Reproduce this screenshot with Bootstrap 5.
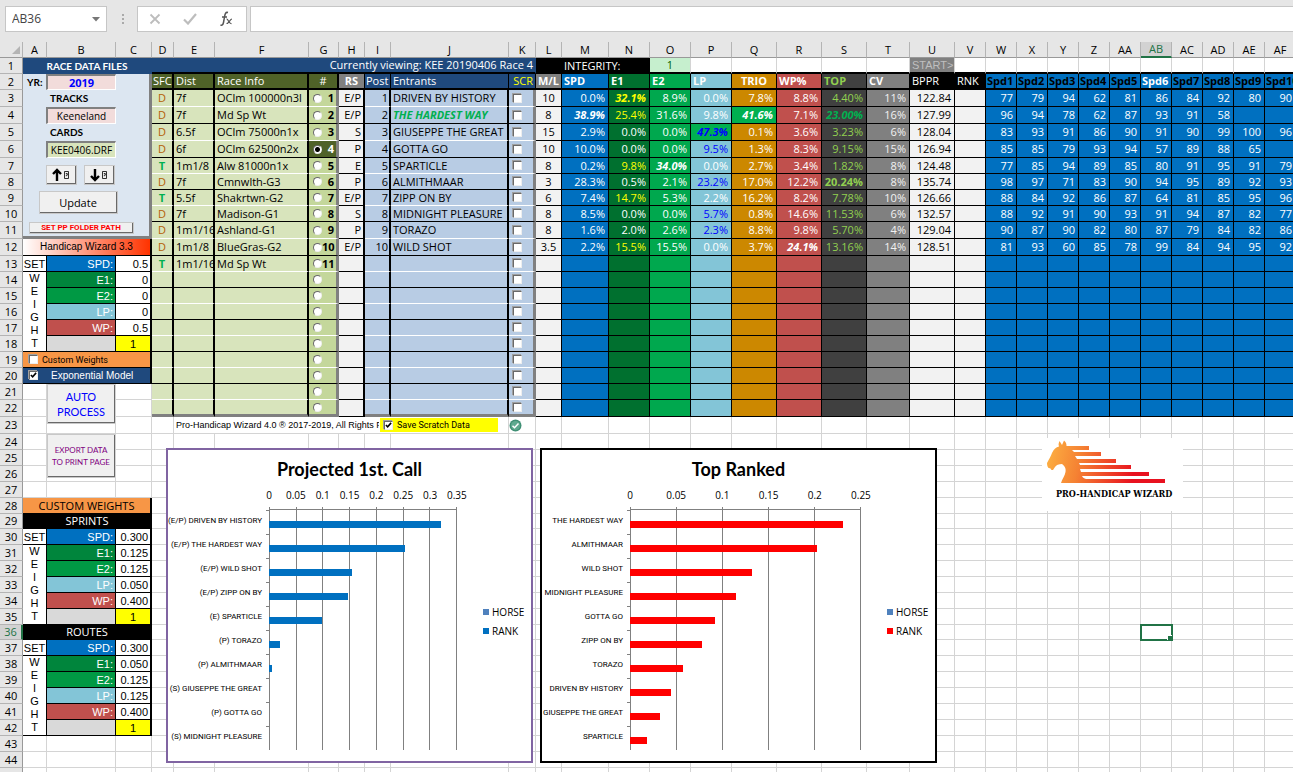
<!DOCTYPE html>
<html lang="en">
<head>
<meta charset="utf-8">
<meta name="viewport" content="width=device-width, initial-scale=1">
<title>Pro-Handicap Wizard</title>
<link href="https://cdn.jsdelivr.net/npm/bootstrap@5.3.0/dist/css/bootstrap.min.css" rel="stylesheet">
<style>
body{font-family:"Open Sans","Noto Sans",sans-serif;font-size:11px;line-height:14px;color:#000;background:#fff}
.toolbar-strip{background:#e6e6e6;height:42px;padding:6px 0 0 5px}
.fx-box{height:26px;border:1px solid #c6c6c6;background:#fff;border-radius:0}
.name-box{width:102px;padding:0 6px}
.name-box input{border:0;width:80px;padding:0;font-size:12px;color:#444;background:none}
.fx-tools{width:110px;margin-left:12px}
.fx-tools button{border:0;background:none;padding:0;line-height:0}
.fx-input{margin-left:3px;border-right:0}
.dots{margin-left:14px;width:4px}
.sheet{table-layout:fixed;width:1296px;border-collapse:separate;border-spacing:0}
.sheet th,.sheet td{padding:0 2px;border:solid #d4d4d4;border-width:0 1px 1px 0;overflow:hidden;white-space:nowrap;font-weight:400;line-height:14px;vertical-align:middle}
.sheet thead th{background:#e6e6e6;text-align:center;border-color:#b4b4b4;border-bottom-color:#999}
.sheet .rh{background:#e6e6e6;text-align:center;border-color:#b4b4b4;border-right-color:#999;padding:0}
.sheet thead .hot{background:#d2d2d2;color:#217346;border-bottom:2px solid #217346}
.sheet .rh.hot{background:#d2d2d2;color:#217346;border-right:2px solid #217346}
.sheet .r{text-align:right}.sheet .c{text-align:center}
.sheet .b{font-weight:700}.sheet .bi{font-weight:700;font-style:italic}
.sheet .blk{background:#000;color:#fff;border-color:#000}
.sheet .navy{background:#1f497d;color:#fff;border-color:#1f497d}
.sheet .ttl{font-family:Lato,sans-serif}
.sheet .h1b{border-bottom:2px solid #000}
.sheet .hdr{border-color:#000;border-bottom:2px solid #000}
.sheet .g1,.sheet .g2,.sheet .g3{border-right:2px solid #000;background:#d8e4bc}
.sheet .g1,.sheet .g2,.sheet .g3,.sheet .g4{border-bottom-color:#000}
.sheet .g4{background:#c4d79b;border-right:3px solid #808080;font-weight:700;padding:0 2px 0 4px}
.sheet .g4.on{background:#4f6228;color:#fff}
.sheet .rs{background:#f2f2f2;border-right:2px solid #000;border-bottom-color:#000;text-align:right}
.sheet .e1,.sheet .e2,.sheet .e3{background:#b8cce4;border-right:2px solid #000;border-bottom-color:#000}
.sheet .e3{border-right:3px solid #808080;padding-left:4px}
.sheet .e1{text-align:right;padding-right:1px}
.sheet .e2{padding-right:0}
.sheet .odd .g1,.sheet .odd .g2,.sheet .odd .g3,.sheet .odd .g4,.sheet .odd .e1,.sheet .odd .e2,.sheet .odd .e3{border-bottom-color:#fff}
.sheet .last .g1,.sheet .last .g2,.sheet .last .g3,.sheet .last .g4,.sheet .last .e1,.sheet .last .e2,.sheet .last .e3{border-bottom:3px solid #808080}
.sheet .gh{background:#4f6228;color:#fff;border-right-width:2px}
.sheet .tight{padding:0 1px}
.sheet .gray{background:#808080;color:#fff}
.sheet .n{border-color:#000;text-align:right;padding-right:3px;color:#fff}
.sheet .n.c{text-align:center;padding-right:2px}
.sheet .m{background:#0070c0}.sheet .e1c{background:#00702f}.sheet .e2c{background:#00a84e}
.sheet .lp{background:#83c5d7}.sheet .tr{background:#c80}.sheet .wp{background:#c0504d}
.sheet .tp{background:#404040;color:#92d050}.sheet .cv{background:#808080;color:#f2f2f2}
.sheet .lt{background:#f2f2f2;color:#000}
.sheet .hi{background:#00b050}
.sheet .yl{color:#ff0}.sheet .bl{color:#00f}
.sheet .th-l{text-align:left;color:#fff;font-weight:700}
.sheet .blackt{color:#000}
.dirt{color:#b45f06}.turf{color:#00b050;font-weight:700}
.sheet .turf-c{color:#00b050;font-weight:700}
.sheet .w{font-family:"Liberation Sans",sans-serif;border-color:#000}
.sheet .wg1{background:#00853c}.sheet .wg2{background:#009944}.sheet .sum{background:#ff0}.sheet .d9{background:#d9d9d9}
.sheet .endc{border-right:2px solid #000}
.sheet .set-c{padding:0}
.sheet .s10{font-size:10px}
.sheet .orange{background:#f79646}
.sheet .vert{font-family:"Liberation Sans",sans-serif;vertical-align:top;border-color:#000;padding:0;text-align:center}
.vert div{line-height:13px}
.sheet .wiz{background:linear-gradient(90deg,#fff,#ff3300)}
.sheet .panel-cell{background:#dce6f1;padding:0;border-right:3px solid #808080;border-bottom:3px solid #808080;vertical-align:top}
.files{display:grid;grid-template-columns:23px 70px 1fr;grid-template-rows:16px 17px 17px 17px 17px}
.files label{font-weight:700;font-size:10px;line-height:16px;font-family:Lato,sans-serif}
.files input{font-size:10px;width:70px;padding:0;text-align:center;border:solid;border-width:2px 1px 1px 2px;border-color:#808080 #fff #fff #808080;background:#f2dcdb;border-radius:0}
.files .yr-in{color:#00f;font-weight:700;font-size:11px}
.files .card-in{background:#d8e4bc}
.btn3d{background:#f0f0f0;border:solid;border-width:1px 2px 2px 1px;border-color:#fff #696969 #696969 #fff;padding:0;border-radius:0;font-size:11px;line-height:15px;color:#000;outline:1px solid #c8c8c8;outline-offset:-1px}
.btn-arrow{width:31px;height:20px;line-height:0}
.btn-up{width:79px;height:23px;margin:6px 0 0 16px}
.btn-path{width:105px;height:12px;font-size:8px;line-height:8px;color:red;font-weight:700;font-family:Roboto,sans-serif;margin:8px 0 0 6px}
.btn-auto{width:69px;height:40px;color:#00f;font-family:Lato,sans-serif}
.btn-export{width:69px;height:44px;color:#800080;font-size:8px;line-height:12px;font-family:Lato,sans-serif}
.arrows{margin:7px 0 0 23px;gap:7px}
.ck{appearance:none;width:9px;height:9px;margin:0;background:#fff;border:solid;border-width:1px;border-color:#696969 #eee #eee #696969;display:block;flex:none;box-shadow:-1px -1px 0 #a0a0a0}
.ck:checked{background:#fff url("data:image/svg+xml,%3Csvg xmlns='http://www.w3.org/2000/svg' viewBox='0 0 8 8'%3E%3Cpath d='M1 3.5l2 2 4-4.500' fill='none' stroke='%23000' stroke-width='1.800'/%3E%3C/svg%3E") center/7px no-repeat}
.rd{appearance:none;width:9px;height:9px;margin:0;border-radius:50%;background:#fff;border:1px solid;border-color:#696969 #eee #eee #696969;display:block;flex:none}
.rd:checked{background:radial-gradient(#000 2px,#fff 3px)}
.cw-lbl{font:9px/14px Roboto,sans-serif;padding-left:4px}
.em-lbl{font-size:10px;gap:13px;padding-left:4px}
.save-lbl{background:#ff0;height:14px;width:118px;font-family:Roboto,sans-serif;font-size:9px;margin-left:1px;padding-left:4px}
.copy{font-family:"Liberation Sans",sans-serif;width:203px;font-size:9px;line-height:16px}
.sheet .sel{overflow:visible;position:relative;outline:2px solid #217346;outline-offset:-1px}
.sel::after{content:"";position:absolute;right:-2px;bottom:-2px;width:5px;height:5px;background:#217346;box-shadow:-1px -1px 0 #fff}
.chart-a,.chart-b{position:absolute;top:406px;height:315px;background:#fff;border:2px solid #8064a2;padding:8px 0 0}
.chart-a{left:166px;width:367px}
.chart-b{left:540px;width:397px;border-color:#000}
.chart-title{font-size:18px;line-height:22px;font-weight:700;text-align:center;margin:0;font-family:Lato,sans-serif}
.chart-body{display:grid;grid-template-columns:var(--lab) var(--plot) 1fr;font-size:10px}
.axis{grid-column:2;height:29px;padding-top:6px;line-height:18px}
.axis span{width:0;display:flex;justify-content:center}
.names{grid-column:1;font-size:8px;font-family:Roboto,sans-serif;white-space:nowrap}
.names div{height:24px;line-height:24px;text-align:right;padding-right:7px}
.plot{grid-column:2;height:241px;border-top:1px solid #808080}
.gridl{position:absolute;left:0;right:0;top:-3px;bottom:0}
.gridl i{flex:1 1 0;border-left:1px solid #808080}
.gridl i:last-child{flex:0 0 1px}
.bars div{height:24px;position:relative;padding-top:11px}
.bars div::before{content:"";position:absolute;left:-3px;top:0;width:3px;height:1px;background:#808080}
.bars b{display:block;height:7px;background:var(--bar)}
.legend-c{grid-column:3;padding:96px 0 0 var(--leg);line-height:14px}
.legend-c i{width:6px;height:6px;margin-right:3px}
.legend-c div{margin-bottom:5px}
.logo-box{position:absolute;left:1042px;top:396px;width:141px;height:73px;background:#fff}
.sheet-area{min-height:0}
</style>
</head>
<body class="vh-100 d-flex flex-column overflow-hidden">
<header class="toolbar-strip d-flex flex-shrink-0">
  <div class="fx-box name-box d-flex align-items-center justify-content-between">
    <input type="text" value="AB36" aria-label="Name box">
    <svg width="8" height="5" viewBox="0 0 8 5"><path d="M0 0h8L4 4.500z" fill="#777"/></svg>
  </div>
  <svg class="dots" width="4" height="26" viewBox="0 0 4 26"><path d="M1 8h2v2H1zM1 12h2v2H1zM1 16h2v2H1z" fill="#aaa"/></svg>
  <div class="fx-box fx-tools d-flex align-items-center justify-content-around">
    <button type="button" aria-label="Cancel"><svg width="12" height="12" viewBox="0 0 12 12"><path d="M1.500 1.500l9 9M10.500 1.500l-9 9" stroke="#bdbdbd" stroke-width="1.800"/></svg></button>
    <button type="button" aria-label="Enter"><svg width="14" height="12" viewBox="0 0 14 12"><path d="M1 6.500l4 4L13 1" fill="none" stroke="#bdbdbd" stroke-width="2.200"/></svg></button>
    <button type="button" aria-label="Insert function"><svg width="16" height="16" viewBox="0 0 16 16"><g fill="none" stroke="#555"><path d="M9 1.500C6.500.800 6 3 5.500 6L4.500 11.500C4 14 3 14.500 1.500 14M3 6h5" stroke-width="1.500"/><path d="M7.500 8c2-.5 2 5 5 4.500M13 8c-2 0-3 4.500-5.500 4.500" stroke-width="1.200"/></g></svg></button>
  </div>
  <input class="fx-box fx-input flex-grow-1" type="text" aria-label="Formula bar">
</header>
<main class="sheet-area position-relative flex-grow-1 overflow-hidden">
  <table class="sheet" id="sheet"></table>
  <section class="chart-a" id="chartA" aria-label="Projected 1st. Call"></section>
  <section class="chart-b" id="chartB" aria-label="Top Ranked"></section>
  <div class="logo-box">
    <svg width="141" height="73" viewBox="0 0 141 73" role="img" aria-label="Pro-Handicap Wizard logo">
      <defs><linearGradient id="fire" gradientUnits="userSpaceOnUse" x1="4" y1="0" x2="95" y2="20"><stop offset="0" stop-color="#fdb544"/><stop offset=".4" stop-color="#f58233"/><stop offset="1" stop-color="#e8111f"/></linearGradient></defs>
      <path fill="url(#fire)" d="M17 8.500C16 6 17 5 17.500 3L20 7L22 2.500C24 4 24.500 6 24.500 8H47V12H30L32 14H59V18H33L35 21H74V25H37L38 27H89V31H38L39 34H107V38H40C41 40 42 40.500 44 41H123V45H19C20 41 23 38 23.500 34C24 31 23.500 29 20 26C17 26 14 27 13 29L11 32C9 32.500 9 31 8 30C6 31 5 28 5 25C7 21 9 18 10 15C12 11 14 9 17 8.500Z"/>
      <text x="14" y="59" font-family="'DejaVu Serif Condensed','DejaVu Serif',serif" font-weight="700" font-size="9" fill="#000">PRO-HANDICAP WIZARD</text>
    </svg>
  </div>
</main>
<script>
const widths=[23,24,69,36,22,41,94,30,26,26,118,27,26,47,41,41,41,45,45,45,43,45,31,31,31,31,31,31,31,31,31,31,31];
const letters='A B C D E F G H I J K L M N O P Q R S T U V W X Y Z AA AB AC AD AE AF'.split(' ');
const heights={3:17,4:17,5:17,6:17,11:17,12:17,22:17,23:17,29:15,36:15};
const td=(t='',c='',a='')=>`<td class="${c}" ${a}>${t}</td>`;
const blanks=n=>'<td></td>'.repeat(n);

const races=[['D','7f','OClm 100000n3l'],['D','7f','Md Sp Wt'],['D','6.5f','OClm 75000n1x'],['D','6f','OClm 62500n2x'],['T','1m1/8','Alw 81000n1x'],['D','7f','Cmnwlth-G3'],['T','5.5f','Shakrtwn-G2'],['D','7f','Madison-G1'],['D','1m1/16','Ashland-G1'],['D','1m1/8','BlueGras-G2'],['T','1m1/16','Md Sp Wt']];
/* suffixes on a value: * bold italic, y yellow, u blue, h highlighted cell, b bold, g green */
const horses=[
['E/P','DRIVEN BY HISTORY','10','0.0%','32.1%*y','8.9%','0.0%','7.8%','8.8%','4.40%','11%','122.84','77 79 94 62 81 86 84 92 80 90'],
['E/P','THE HARDEST WAY','8','38.9%*','25.4%y','31.6%','9.8%','41.6%*h','7.1%','23.00%*g','16%','127.99','96 94 78 62 87 93 91 58'],
['S','GIUSEPPE THE GREAT','15','2.9%','0.0%','0.0%','47.3%*uh','0.1%','3.6%','3.23%','6%','128.04','83 93 91 86 90 91 90 99 100 96'],
['P','GOTTA GO','10','10.0%','0.0%','0.0%','9.5%u','1.3%','8.3%','9.15%','15%','126.94','85 85 79 93 94 57 89 88 65'],
['E','SPARTICLE','8','0.2%','9.8%y','34.0%*','0.0%','2.7%','3.4%','1.82%','8%','124.48','77 85 94 89 85 80 91 95 91 79'],
['P','ALMITHMAAR','3','28.3%','0.5%','2.1%','23.2%u','17.0%','12.2%','20.24%b','8%','135.74','98 97 71 83 90 94 95 89 92 93'],
['E/P','ZIPP ON BY','6','7.4%','14.7%y','5.3%','2.2%','16.2%','8.2%','7.78%','10%','126.66','88 84 92 86 87 64 81 85 95 96'],
['S','MIDNIGHT PLEASURE','8','8.5%','0.0%','0.0%','5.7%u','0.8%','14.6%','11.53%','6%','132.57','88 92 91 90 93 91 94 87 82 77'],
['P','TORAZO','8','1.6%','2.0%','2.6%','2.3%u','8.8%','9.8%','5.70%','4%','129.04','90 87 90 82 80 87 79 84 82 86'],
['E/P','WILD SHOT','3.5','2.2%','15.5%y','15.5%','0.0%','3.7%','24.1%*','13.16%','14%','128.51','81 93 60 85 78 99 84 94 95 92']];
const cols=['m','e1c','e2c','lp','tr','wp','tp','cv'];

const filesPanel=`<div class="files">
 <label for="yr" class="ps-1">YR:</label><input id="yr" class="yr-in" value="2019"><span></span>
 <span></span><label for="trk" class="ps-1">TRACKS</label><span></span>
 <span></span><input id="trk" value="Keeneland"><span></span>
 <span></span><label for="crd" class="ps-1">CARDS</label><span></span>
 <span></span><input id="crd" class="card-in" value="KEE0406.DRF"><span></span></div>
 <div class="d-flex arrows">${['M6 13V2M2 6l4-4 4 4','M6 1v11M2 8l4 4 4-4'].map((d,i)=>`<button type="button" class="btn3d btn-arrow" aria-label="${i?'Next':'Previous'}"><svg width="20" height="14" viewBox="0 0 20 14"><path d="${d}" fill="none" stroke="#000" stroke-width="2.400"/><path d="M13.500 3.500h4v7h-4zM14.800 5.500h1.500v1.700h-1v1" fill="none" stroke="#000" stroke-width=".8"/></svg></button>`).join('')}</div>
 <button type="button" class="btn3d btn-up d-block">Update</button>
 <button type="button" class="btn3d btn-path d-block">SET PP FOLDER PATH</button>`;
const vert=n=>td([...'WEIGHT'].map(l=>`<div>${l}</div>`).join(''),'vert',`rowspan="${n}"`);
const W=[['SPD:','m'],['E1:','wg1'],['E2:','wg2'],['LP:','lp'],['WP:','wp']];
const weights=(i,vals)=>{
  const v=i<5?vals[i]:'1';
  return (i==0?td('SET','w c set-c'):i==1?vert(5):'')+
    (i<5?td(W[i][0],'w r text-white '+W[i][1]):td('','w d9'))+td(v,'w endc '+(i<5?'r':'c sum'));
};
function left(r){
  if(r==1)return td('RACE DATA FILES','navy b c ttl s10','colspan="3"');
  if(r==2)return td(filesPanel,'panel-cell','colspan="3" rowspan="10"');
  if(r<12)return'';
  if(r==12)return td('Handicap Wizard 3.3','w c wiz endc s10','colspan="3"');
  if(r<19)return weights(r-13,['0.5','0','0','0','0.5']);
  if(r==19)return td('<label class="d-flex align-items-center gap-1 cw-lbl"><input type="checkbox" class="ck">Custom Weights</label>','w orange endc','colspan="3"');
  if(r==20)return td('<label class="d-flex align-items-center em-lbl"><input type="checkbox" class="ck" checked>Exponential Model</label>','w navy endc','colspan="3"');
  if(r==21)return'<td></td>'+td('<button type="button" class="btn3d btn-auto d-block">AUTO<br>PROCESS</button>','p-0 align-top','rowspan="3"')+'<td></td>';
  if(r==24)return'<td></td>'+td('<button type="button" class="btn3d btn-export d-block">EXPORT DATA<br>TO PRINT PAGE</button>','p-0 align-top','rowspan="3"')+'<td></td>';
  if(r<27)return blanks(2);
  if(r==28)return td('CUSTOM WEIGHTS','w orange c endc','colspan="3" style="font-family:inherit"');
  if(r==29||r==36)return td(r==29?'SPRINTS':'ROUTES','blk c','colspan="3"');
  if(r>=30&&r<36)return weights(r-30,['0.300','0.125','0.125','0.050','0.400']);
  if(r>=37&&r<43)return weights(r-37,['0.300','0.050','0.125','0.125','0.400']);
  return blanks(3);
}
function pct(v,c){
  const[,n,f]=v.match(/^([\d.]+%)(.*)$/);let k='n '+c;
  if(f.includes('*'))k+=' bi';if(f.includes('b'))k+=' b';if(f.includes('y'))k+=' yl';if(f.includes('u'))k+=' bl';if(f.includes('h'))k+=' hi';
  return td(f.includes('g')?`<span class="turf">${n}</span>`:n,k);
}
function right(r){
  if(r==1)return td('Currently viewing: KEE 20190406 Race 4','navy r h1b','colspan="8"')+td('INTEGRITY:','blk','colspan="3" style="padding-left:28px"')+td('1','c h1b','style="background:#c6efce;color:#006100"')+
    td('','h1b').repeat(5)+td('START&gt;','gray c h1b','style="color:#bfbfbf;font-family:Liberation Sans"')+td('','h1b').repeat(11);
  if(r==2)return['SFC','Dist','Race Info'].map((t,i)=>td(t,'hdr gh'+(i?'':' tight'))).join('')+td('#','hdr gh c')+td('RS','hdr gray b c')+
    td('Post','hdr navy tight','style="border-color:#000"')+td('Entrants','hdr navy','style="border-color:#000"')+td('SCR','hdr navy yl r','style="border-color:#000"')+td('M/L','hdr gray b c tight')+
    ['SPD','E1','E2','LP','TRIO','WP%','TOP','CV'].map((t,i)=>td(t,'hdr n '+cols[i]+(t=='TRIO'?' b c':t=='TOP'?' b text-start':' th-l'))).join('')+
    td('BPPR','hdr blk')+td('RNK','hdr blk')+Array.from({length:10},(_,i)=>td('Spd'+(i+1),'hdr m b tight'+(i==5?' text-white':' blackt'))).join('');
  if(r<23){
    const g=races[r-3]||[],h=horses[r-3],n=r-2,on=n==4;
    let s=td(g[0]||'','g1 c '+(g[0]=='T'?'turf-c':'dirt'))+td(g[1]||'','g2')+td(g[2]||'','g3')+
      td(`<div class="d-flex align-items-center justify-content-between"><input type="radio" name="race" class="rd" aria-label="Race ${n}" ${on?'checked':''}><span>${g[0]?n:''}</span></div>`,'g4'+(on?' on':''))+
      td(h?h[0]:'','rs')+td(h?n:'','e1')+td(h?(n==2?`<span class="turf fst-italic">${h[1]}</span>`:h[1]):'','e2')+
      td(`<input type="checkbox" class="ck" aria-label="Scratch ${n}">`,'e3')+td(h?h[2]:'','n lt c');
    for(let i=0;i<8;i++)s+=h?pct(h[3+i],cols[i]):td('','n '+cols[i]);
    s+=td(h?h[11]:'','n lt')+td('','n lt');
    const sp=h?h[12].split(' '):[];
    for(let i=0;i<10;i++)s+=td(sp[i]||'','n m');
    return s;
  }
  if(r==23)return'<td></td>'+td(`<div class="d-flex align-items-center"><span class="copy overflow-hidden">Pro-Handicap Wizard 4.0 ® 2017-2019, All Rights F</span><label class="save-lbl d-flex align-items-center gap-1"><input type="checkbox" class="ck" checked>Save Scratch Data</label></div>`,'','colspan="6"')+
    td('<svg class="d-block" width="13" height="13" viewBox="0 0 13 13"><circle cx="6.500" cy="6.500" r="6" fill="#3f8f74"/><circle cx="6.500" cy="6.500" r="4.600" fill="#5fa98f"/><path d="M3.500 6.800l2 2 4-4.200" fill="none" stroke="#fff" stroke-width="1.500"/></svg>','p-0')+blanks(21);
  return r==36?blanks(24)+td('','sel')+blanks(4):blanks(29);
}
let html='<colgroup>'+widths.map(w=>`<col style="width:${w}px">`).join('')+'</colgroup><thead><tr style="height:16px"><th scope="col" class="p-0"><svg class="d-block ms-auto" width="11" height="10" viewBox="0 0 11 10"><path d="M9 1v8H1z" fill="#b4b4b4"/></svg></th>'+
  letters.map(l=>`<th scope="col" class="${l=='AB'?'hot':''}">${l}</th>`).join('')+'</tr></thead><tbody>';
for(let r=1;r<=60;r++)html+=`<tr class="${r==22?'last':r%2?'odd':''}" style="height:${heights[r]||16}px"><th scope="row" class="rh${r==36?' hot':''}">${r}</th>${left(r)}${right(r)}</tr>`;
document.getElementById('sheet').innerHTML=html+'</tbody>';

function chart(id,title,max,ticks,lab,plot,leg,color,rows){
  const el=document.getElementById(id);
  el.style.cssText=`--lab:${lab}px;--plot:${plot}px;--leg:${leg}px;--bar:${color}`;
  el.innerHTML=`<h2 class="chart-title">${title}</h2><div class="chart-body">
  <div class="axis d-flex justify-content-between">${ticks.map(t=>`<span>${t}</span>`).join('')}</div>
  <div class="names">${rows.map(x=>`<div>${x[0]}</div>`).join('')}</div>
  <div class="plot position-relative"><div class="gridl d-flex">${ticks.map(()=>'<i></i>').join('')}</div>
  <div class="bars position-relative">${rows.map(x=>`<div><b style="width:${(x[1]/max*100).toFixed(1)}%"></b></div>`).join('')}</div></div>
  <div class="legend-c"><div class="d-flex align-items-center"><i style="background:#4f81bd"></i>HORSE</div><div class="d-flex align-items-center"><i style="background:${color}"></i>RANK</div></div></div>`;
}
chart('chartA','Projected 1st. Call',.35,['0','0.05','0.1','0.15','0.2','0.25','0.3','0.35'],101,188,26,'#0070c0',
[['(E/P) DRIVEN BY HISTORY',.321],['(E/P) THE HARDEST WAY',.254],['(E/P) WILD SHOT',.155],['(E/P) ZIPP ON BY',.147],['(E) SPARTICLE',.098],['(P) TORAZO',.02],['(P) ALMITHMAAR',.005],['(S) GIUSEPPE THE GREAT',0],['(P) GOTTA GO',0],['(S) MIDNIGHT PLEASURE',0]]);
chart('chartB','Top Ranked',.25,['0','0.05','0.1','0.15','0.2','0.25'],88,231,26,'#f00',
[['THE HARDEST WAY',.23],['ALMITHMAAR',.2024],['WILD SHOT',.1316],['MIDNIGHT PLEASURE',.1153],['GOTTA GO',.0915],['ZIPP ON BY',.0778],['TORAZO',.057],['DRIVEN BY HISTORY',.044],['GIUSEPPE THE GREAT',.0323],['SPARTICLE',.0182]]);
</script>
<script src="https://cdn.jsdelivr.net/npm/bootstrap@5.3.0/dist/js/bootstrap.bundle.min.js"></script>
</body>
</html>
